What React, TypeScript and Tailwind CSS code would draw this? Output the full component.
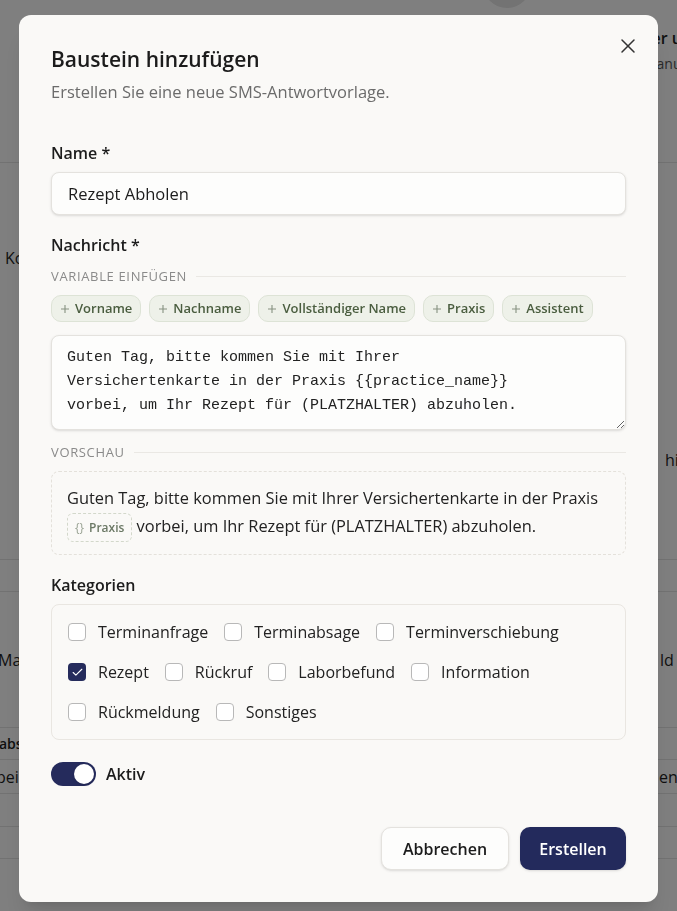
import { X, Check } from "lucide-react";

const chips = ["Vorname", "Nachname", "Vollständiger Name", "Praxis", "Assistent"];

const categories = [
  { label: "Terminanfrage", checked: false },
  { label: "Terminabsage", checked: false },
  { label: "Terminverschiebung", checked: false },
  { label: "Rezept", checked: true },
  { label: "Rückruf", checked: false },
  { label: "Laborbefund", checked: false },
  { label: "Information", checked: false },
  { label: "Rückmeldung", checked: false },
  { label: "Sonstiges", checked: false },
];

const message =
  "Guten Tag, bitte kommen Sie mit Ihrer\nVersichertenkarte in der Praxis {{practice_name}}\nvorbei, um Ihr Rezept für (PLATZHALTER) abzuholen.";

function BackgroundPage() {
  return (
    <div className="flex h-[911px] flex-col overflow-hidden bg-white text-[#1f1f1f]">
      {/* header */}
      <div className="h-[163px] shrink-0 border-b border-[#e5e5e5]">
        <div className="-mt-[40px] ml-[483px] h-[48px] w-[48px] rounded-full bg-[#e6e6e6]" />
        <div className="mt-[18px] ml-[647px] whitespace-nowrap text-base font-semibold leading-6">ler und Vorlagen</div>
        <div className="mt-[2px] ml-[644px] whitespace-nowrap text-sm leading-6 text-[#555]">Manuell</div>
      </div>
      {/* content */}
      <div className="flex h-[397px] shrink-0 flex-col border-b border-[#e5e5e5]">
        <div className="mt-[83px] ml-[5px] whitespace-nowrap text-base leading-6">Kontakt</div>
        <div className="mt-[178px] ml-[665px] whitespace-nowrap text-base font-medium leading-6">hinzufügen</div>
      </div>
      <div className="h-[32px] shrink-0 border-b border-[#e5e5e5]" />
      <div className="flex h-[136px] shrink-0 items-center border-b border-[#e5e5e5]">
        <span className="-ml-[2px] w-[662px] shrink-0 whitespace-nowrap text-base">Max</span>
        <span className="whitespace-nowrap text-base">ld</span>
      </div>
      <div className="flex h-[32px] shrink-0 items-center border-b border-[#e5e5e5]">
        <span className="-ml-[1px] whitespace-nowrap text-sm font-semibold">abs</span>
      </div>
      <div className="flex h-[34px] shrink-0 items-center border-b border-[#e5e5e5]">
        <span className="-ml-[4px] w-[663px] shrink-0 whitespace-nowrap text-base">bei</span>
        <span className="whitespace-nowrap text-base">en</span>
      </div>
      <div className="h-[33px] shrink-0 border-b border-[#e5e5e5]" />
      <div className="h-[32px] shrink-0 border-b border-[#e5e5e5]" />
    </div>
  );
}

function CheckBox({ checked }: { checked: boolean }) {
  if (checked) {
    return (
      <span className="flex h-[18px] w-[18px] shrink-0 items-center justify-center rounded-[4px] bg-[#252b5c]">
        <Check size={13} strokeWidth={2} className="text-white" />
      </span>
    );
  }
  return <span className="h-[18px] w-[18px] shrink-0 rounded-[4px] border border-[#b8b8b8] bg-white" />;
}

function SectionDivider({ label }: { label: string }) {
  return (
    <div className="flex items-center gap-[9px]">
      <span className="text-[13px] uppercase leading-[18px] tracking-[0.05em] text-[#8a8a8a]">{label}</span>
      <span className="h-px flex-1 bg-[#eae8e4]" />
    </div>
  );
}

export default function App() {
  return (
    <div className="relative font-['Open_Sans',Roboto,sans-serif]">
      <BackgroundPage />
      <div className="fixed inset-0 bg-black/50" />

      <div className="fixed inset-0 flex justify-center pt-[15px]">
        <div className="relative h-fit w-[639px] rounded-xl bg-[#faf9f7] px-8 pt-[30px] pb-8 shadow-xl">
          <button className="absolute right-[18px] top-[19px] text-[#333]">
            <X size={24} strokeWidth={1.5} />
          </button>

          <h2 className="text-[21px] font-semibold leading-7 text-[#1c1c1c]">Baustein hinzufügen</h2>
          <p className="mt-[7px] text-[16.5px] leading-6 text-[#6b6b6b]">Erstellen Sie eine neue SMS-Antwortvorlage.</p>

          <label className="mt-[37px] block text-base font-semibold leading-6 text-[#1c1c1c]">Name *</label>
          <input
            readOnly
            value="Rezept Abholen"
            className="mt-[7px] h-[43px] w-full rounded-lg border border-[#e4e2de] bg-[#fdfdfc] px-4 text-[16.5px] text-[#1c1c1c] shadow-sm outline-none"
          />

          <label className="mt-[18px] block text-base font-semibold leading-6 text-[#1c1c1c]">Nachricht *</label>
          <div className="mt-[10px]">
            <SectionDivider label="Variable einfügen" />
          </div>
          <div className="mt-[10px] flex gap-2">
            {chips.map((c) => (
              <span
                key={c}
                className="flex h-[27px] items-center gap-[6px] rounded-[10px] border border-[#dde3d6] bg-[#eef1e9] pl-[9px] pr-[8px] text-[13px] font-semibold text-[#4a5d3f]"
              >
                <svg width="8" height="8" viewBox="0 0 8 8" className="text-[#879281]">
                  <path d="M4 0v8M0 4h8" stroke="currentColor" strokeWidth="1.1" />
                </svg>
                {c}
              </span>
            ))}
          </div>

          <textarea
            readOnly
            defaultValue={message}
            className="mt-[13px] block h-[95px] w-full resize-y rounded-lg border border-[#e4e2de] bg-[#fdfdfc] px-[15px] pt-[10px] font-['Liberation_Mono',monospace] text-[15px] leading-6 text-[#222] shadow-sm outline-none"
          />

          <div className="mt-[13px]">
            <SectionDivider label="Vorschau" />
          </div>
          <div className="mt-[10px] rounded-lg border border-dashed border-[#e4e1db] px-[15px] py-3 text-[16.4px] leading-7 text-[#222]">
            Guten Tag, bitte kommen Sie mit Ihrer Versichertenkarte in der Praxis{" "}
            <span className="inline-flex h-[29px] items-center gap-[5px] rounded-md border border-dashed border-[#d3d8cb] px-[7px] align-middle text-[12px] font-semibold leading-none text-[#6b7865]">
              <span className="font-normal text-[#9aa394]">{"{}"}</span>
              Praxis
            </span>{" "}
            vorbei, um Ihr Rezept für (PLATZHALTER) abzuholen.
          </div>

          <div className="mt-[18px] text-base font-semibold leading-6 text-[#1c1c1c]">Kategorien</div>
          <div className="mt-[7px] flex flex-wrap gap-4 rounded-lg border border-[#e9e6e1] px-4 py-[15px]">
            {categories.map((c) => (
              <div key={c.label} className="flex h-6 items-center gap-3 text-base text-[#222]">
                <CheckBox checked={c.checked} />
                {c.label}
              </div>
            ))}
          </div>

          <div className="mt-[22px] flex items-center gap-[10px]">
            <span className="flex h-6 w-[45px] items-center justify-end rounded-full bg-[#252b5c] px-[2px]">
              <span className="h-5 w-5 rounded-full bg-white shadow" />
            </span>
            <span className="text-base font-semibold text-[#1c1c1c]">Aktiv</span>
          </div>

          <div className="mt-[41px] flex justify-end gap-[11px]">
            <button className="h-[43px] w-[128px] rounded-[10px] border border-[#e4e2de] bg-[#fdfdfc] text-base font-semibold text-[#1c1c1c] shadow-sm">
              Abbrechen
            </button>
            <button className="h-[43px] w-[106px] rounded-[10px] bg-[#232a5c] text-base font-semibold text-white shadow-sm">
              Erstellen
            </button>
          </div>
        </div>
      </div>
    </div>
  );
}
